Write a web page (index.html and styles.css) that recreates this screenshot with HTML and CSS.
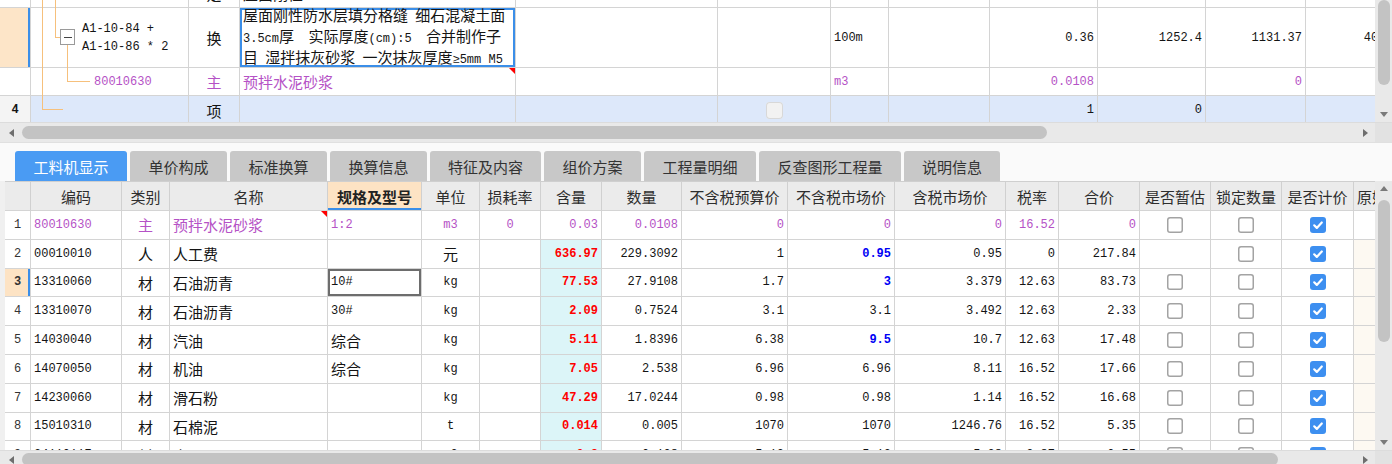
FILE: index.html
```html
<!DOCTYPE html>
<html lang="zh-CN">
<head>
<meta charset="utf-8">
<title>工料机显示</title>
<link rel="stylesheet" href="styles.css">
</head>
<body>
<div class="upper">
  <div class="ugrid">
    <div class="urow r0">
      <div class="cell"></div>
      <div class="cell"></div>
      <div class="cell c cn">定</div>
      <div class="cell cn">屋面刚性</div>
      <div class="cell"></div><div class="cell"></div><div class="cell"></div><div class="cell"></div>
      <div class="cell"></div><div class="cell"></div><div class="cell"></div><div class="cell"></div>
    </div>
    <div class="urow rh">
      <div class="cell pe"></div>
      <div class="cell treecell"><div class="tlines">A1-10-84 +<br>A1-10-86 * 2</div></div>
      <div class="cell c cn">换</div>
      <div class="cell sel"><div class="wrap cn">
        <div>屋面刚性防水层填分格缝<span class="m"> </span>细石混凝土面</div>
        <div><span class="m">3.5cm</span>厚<span class="m">  </span>实际厚度<span class="m">(cm):5  </span>合并制作子</div>
        <div>目<span class="m"> </span>湿拌抹灰砂浆<span class="m"> </span>一次抹灰厚度<span class="m">≥5mm M5</span></div>
      </div></div>
      <div class="cell"></div>
      <div class="cell"></div>
      <div class="cell">100m</div>
      <div class="cell"></div>
      <div class="cell r">0.36</div>
      <div class="cell r">1252.4</div>
      <div class="cell r">1131.37</div>
      <div class="cell r">407.29</div>
    </div>
    <div class="urow rm mag">
      <div class="cell"></div>
      <div class="cell treecell2">80010630</div>
      <div class="cell c cn">主</div>
      <div class="cell cn mark">预拌水泥砂浆</div>
      <div class="cell"></div>
      <div class="cell"></div>
      <div class="cell">m3</div>
      <div class="cell"></div>
      <div class="cell r">0.0108</div>
      <div class="cell r"></div>
      <div class="cell r">0</div>
      <div class="cell r"></div>
    </div>
    <div class="urow r4">
      <div class="cell c b lg">4</div>
      <div class="cell"></div>
      <div class="cell c cn">项</div>
      <div class="cell"></div>
      <div class="cell"></div>
      <div class="cell c"><span class="cb dis"></span></div>
      <div class="cell"></div>
      <div class="cell"></div>
      <div class="cell r">1</div>
      <div class="cell r">0</div>
      <div class="cell r"></div>
      <div class="cell r"></div>
    </div>
  </div>
  <svg class="tree" width="158" height="122" viewBox="0 0 158 122">
    <g stroke="#f6c07c" stroke-width="1" fill="none" shape-rendering="crispEdges">
      <path d="M11.5 0V109.5H32"/>
      <path d="M24.5 0V37.5H29"/>
      <path d="M36.5 45V81.5H58.5"/>
    </g>
    <rect x="29.5" y="29.5" width="14" height="15" fill="#fff" stroke="#9a9a9a" shape-rendering="crispEdges"/>
    <path d="M33 37.5H41" stroke="#444" stroke-width="1" shape-rendering="crispEdges"/>
  </svg>
  <div class="vbar">
    <div class="vthumb top"></div>
    <div class="sp"></div>
    <div class="tri-d"></div>
  </div>
</div>

<div class="hbar">
  <div class="abox"><span class="tri-l"></span></div>
  <div class="hthumb t1"></div>
  <div class="sp"></div>
  <div class="abox r"><span class="tri-r"></span></div>
  <div class="corner"></div>
</div>
<div class="gap"></div>

<div class="tabs cn">
  <div class="tab active w112">工料机显示</div>
  <div class="tab w97">单价构成</div>
  <div class="tab w97">标准换算</div>
  <div class="tab w97">换算信息</div>
  <div class="tab w111">特征及内容</div>
  <div class="tab w97">组价方案</div>
  <div class="tab w112">工程量明细</div>
  <div class="tab w142">反查图形工程量</div>
  <div class="tab w96">说明信息</div>
</div>

<div class="lower">
  <div class="lgrid">
    <div class="lrow lhead cn">
      <div class="cell"></div>
      <div class="cell c">编码</div>
      <div class="cell c">类别</div>
      <div class="cell c">名称</div>
      <div class="cell c hl">规格及型号</div>
      <div class="cell c">单位</div>
      <div class="cell c">损耗率</div>
      <div class="cell c">含量</div>
      <div class="cell c">数量</div>
      <div class="cell c">不含税预算价</div>
      <div class="cell c">不含税市场价</div>
      <div class="cell c">含税市场价</div>
      <div class="cell c">税率</div>
      <div class="cell c">合价</div>
      <div class="cell c">是否暂估</div>
      <div class="cell c">锁定数量</div>
      <div class="cell c">是否计价</div>
      <div class="cell">原始含量</div>
    </div>

    <div class="lrow mag">
      <div class="cell c num">1</div>
      <div class="cell">80010630</div>
      <div class="cell c cn">主</div>
      <div class="cell cn mark">预拌水泥砂浆</div>
      <div class="cell">1:2</div>
      <div class="cell c">m3</div>
      <div class="cell c">0</div>
      <div class="cell r">0.03</div>
      <div class="cell r">0.0108</div>
      <div class="cell r">0</div>
      <div class="cell r">0</div>
      <div class="cell r">0</div>
      <div class="cell r">16.52</div>
      <div class="cell r">0</div>
      <div class="cell c"><span class="cb"></span></div>
      <div class="cell c"><span class="cb"></span></div>
      <div class="cell c"><span class="cb on"><svg width="16" height="16" viewBox="0 0 16 16"><path d="M4.2 8.3l2.6 2.6 5-5.4" fill="none" stroke="#fff" stroke-width="2.2" stroke-linecap="round" stroke-linejoin="round"/></svg></span></div>
      <div class="cell"></div>
    </div>

    <div class="lrow">
      <div class="cell c num">2</div>
      <div class="cell">00010010</div>
      <div class="cell c cn">人</div>
      <div class="cell cn">人工费</div>
      <div class="cell"></div>
      <div class="cell c cn">元</div>
      <div class="cell c"></div>
      <div class="cell r cy red">636.97</div>
      <div class="cell r">229.3092</div>
      <div class="cell r">1</div>
      <div class="cell r blue">0.95</div>
      <div class="cell r">0.95</div>
      <div class="cell r">0</div>
      <div class="cell r">217.84</div>
      <div class="cell c"></div>
      <div class="cell c"><span class="cb"></span></div>
      <div class="cell c"><span class="cb on"><svg width="16" height="16" viewBox="0 0 16 16"><path d="M4.2 8.3l2.6 2.6 5-5.4" fill="none" stroke="#fff" stroke-width="2.2" stroke-linecap="round" stroke-linejoin="round"/></svg></span></div>
      <div class="cell cr"></div>
    </div>

    <div class="lrow">
      <div class="cell c num cur">3</div>
      <div class="cell">13310060</div>
      <div class="cell c cn">材</div>
      <div class="cell cn">石油沥青</div>
      <div class="cell focus">10#</div>
      <div class="cell c">kg</div>
      <div class="cell c"></div>
      <div class="cell r cy red">77.53</div>
      <div class="cell r">27.9108</div>
      <div class="cell r">1.7</div>
      <div class="cell r blue">3</div>
      <div class="cell r">3.379</div>
      <div class="cell r">12.63</div>
      <div class="cell r">83.73</div>
      <div class="cell c"><span class="cb"></span></div>
      <div class="cell c"><span class="cb"></span></div>
      <div class="cell c"><span class="cb on"><svg width="16" height="16" viewBox="0 0 16 16"><path d="M4.2 8.3l2.6 2.6 5-5.4" fill="none" stroke="#fff" stroke-width="2.2" stroke-linecap="round" stroke-linejoin="round"/></svg></span></div>
      <div class="cell cr"></div>
    </div>

    <div class="lrow">
      <div class="cell c num">4</div>
      <div class="cell">13310070</div>
      <div class="cell c cn">材</div>
      <div class="cell cn">石油沥青</div>
      <div class="cell">30#</div>
      <div class="cell c">kg</div>
      <div class="cell c"></div>
      <div class="cell r cy red">2.09</div>
      <div class="cell r">0.7524</div>
      <div class="cell r">3.1</div>
      <div class="cell r">3.1</div>
      <div class="cell r">3.492</div>
      <div class="cell r">12.63</div>
      <div class="cell r">2.33</div>
      <div class="cell c"><span class="cb"></span></div>
      <div class="cell c"><span class="cb"></span></div>
      <div class="cell c"><span class="cb on"><svg width="16" height="16" viewBox="0 0 16 16"><path d="M4.2 8.3l2.6 2.6 5-5.4" fill="none" stroke="#fff" stroke-width="2.2" stroke-linecap="round" stroke-linejoin="round"/></svg></span></div>
      <div class="cell cr"></div>
    </div>

    <div class="lrow">
      <div class="cell c num">5</div>
      <div class="cell">14030040</div>
      <div class="cell c cn">材</div>
      <div class="cell cn">汽油</div>
      <div class="cell cn">综合</div>
      <div class="cell c">kg</div>
      <div class="cell c"></div>
      <div class="cell r cy red">5.11</div>
      <div class="cell r">1.8396</div>
      <div class="cell r">6.38</div>
      <div class="cell r blue">9.5</div>
      <div class="cell r">10.7</div>
      <div class="cell r">12.63</div>
      <div class="cell r">17.48</div>
      <div class="cell c"><span class="cb"></span></div>
      <div class="cell c"><span class="cb"></span></div>
      <div class="cell c"><span class="cb on"><svg width="16" height="16" viewBox="0 0 16 16"><path d="M4.2 8.3l2.6 2.6 5-5.4" fill="none" stroke="#fff" stroke-width="2.2" stroke-linecap="round" stroke-linejoin="round"/></svg></span></div>
      <div class="cell cr"></div>
    </div>

    <div class="lrow">
      <div class="cell c num">6</div>
      <div class="cell">14070050</div>
      <div class="cell c cn">材</div>
      <div class="cell cn">机油</div>
      <div class="cell cn">综合</div>
      <div class="cell c">kg</div>
      <div class="cell c"></div>
      <div class="cell r cy red">7.05</div>
      <div class="cell r">2.538</div>
      <div class="cell r">6.96</div>
      <div class="cell r">6.96</div>
      <div class="cell r">8.11</div>
      <div class="cell r">16.52</div>
      <div class="cell r">17.66</div>
      <div class="cell c"><span class="cb"></span></div>
      <div class="cell c"><span class="cb"></span></div>
      <div class="cell c"><span class="cb on"><svg width="16" height="16" viewBox="0 0 16 16"><path d="M4.2 8.3l2.6 2.6 5-5.4" fill="none" stroke="#fff" stroke-width="2.2" stroke-linecap="round" stroke-linejoin="round"/></svg></span></div>
      <div class="cell cr"></div>
    </div>

    <div class="lrow">
      <div class="cell c num">7</div>
      <div class="cell">14230060</div>
      <div class="cell c cn">材</div>
      <div class="cell cn">滑石粉</div>
      <div class="cell"></div>
      <div class="cell c">kg</div>
      <div class="cell c"></div>
      <div class="cell r cy red">47.29</div>
      <div class="cell r">17.0244</div>
      <div class="cell r">0.98</div>
      <div class="cell r">0.98</div>
      <div class="cell r">1.14</div>
      <div class="cell r">16.52</div>
      <div class="cell r">16.68</div>
      <div class="cell c"><span class="cb"></span></div>
      <div class="cell c"><span class="cb"></span></div>
      <div class="cell c"><span class="cb on"><svg width="16" height="16" viewBox="0 0 16 16"><path d="M4.2 8.3l2.6 2.6 5-5.4" fill="none" stroke="#fff" stroke-width="2.2" stroke-linecap="round" stroke-linejoin="round"/></svg></span></div>
      <div class="cell cr"></div>
    </div>

    <div class="lrow">
      <div class="cell c num">8</div>
      <div class="cell">15010310</div>
      <div class="cell c cn">材</div>
      <div class="cell cn">石棉泥</div>
      <div class="cell"></div>
      <div class="cell c">t</div>
      <div class="cell c"></div>
      <div class="cell r cy red">0.014</div>
      <div class="cell r">0.005</div>
      <div class="cell r">1070</div>
      <div class="cell r">1070</div>
      <div class="cell r">1246.76</div>
      <div class="cell r">16.52</div>
      <div class="cell r">5.35</div>
      <div class="cell c"><span class="cb"></span></div>
      <div class="cell c"><span class="cb"></span></div>
      <div class="cell c"><span class="cb on"><svg width="16" height="16" viewBox="0 0 16 16"><path d="M4.2 8.3l2.6 2.6 5-5.4" fill="none" stroke="#fff" stroke-width="2.2" stroke-linecap="round" stroke-linejoin="round"/></svg></span></div>
      <div class="cell cr"></div>
    </div>

    <div class="lrow">
      <div class="cell c num">9</div>
      <div class="cell">34110117</div>
      <div class="cell c cn">材</div>
      <div class="cell cn">水</div>
      <div class="cell"></div>
      <div class="cell c">m3</div>
      <div class="cell c"></div>
      <div class="cell r cy red">0.3</div>
      <div class="cell r">0.108</div>
      <div class="cell r">5.13</div>
      <div class="cell r">5.13</div>
      <div class="cell r">5.28</div>
      <div class="cell r">2.87</div>
      <div class="cell r">0.55</div>
      <div class="cell c"><span class="cb"></span></div>
      <div class="cell c"><span class="cb"></span></div>
      <div class="cell c"><span class="cb on"></span></div>
      <div class="cell cr"></div>
    </div>
  </div>
  <div class="vbar v2">
    <div class="tri-u"></div>
    <div class="vthumb t2"></div>
    <div class="sp"></div>
    <div class="tri-d"></div>
  </div>
</div>

<div class="hbar h2">
  <div class="abox"><span class="tri-l"></span></div>
  <div class="hthumb t3"></div>
  <div class="sp"></div>
  <div class="abox r"><span class="tri-r"></span></div>
  <div class="corner"></div>
</div>
</body>
</html>
```

FILE: styles.css
```css
* { box-sizing: border-box; margin: 0; padding: 0; }
html, body { width: 1392px; height: 464px; overflow: hidden; background: #fff; }
body {
  font-family: "Liberation Mono", "Noto Sans CJK SC", monospace;
  font-size: 12px;
  color: #141414;
}
.cn { font-family: "Noto Sans CJK SC", "Noto Sans", sans-serif; font-size: 15px; }
.m { font-family: "Liberation Mono", monospace; font-size: 12px; white-space: pre; }
.b { font-weight: bold; }

/* ---------- upper grid ---------- */
.upper { display: flex; height: 122px; position: relative; }
.ugrid { width: 1375px; height: 122px; overflow: hidden; }
.urow {
  display: grid;
  grid-template-columns: 31px 158px 51px 276px 202px 113px 58px 101px 108px 108px 100px 105px;
  background: #fff;
}
.cell {
  border-right: 1px solid #d4d4d4;
  border-bottom: 1px solid #d4d4d4;
  display: flex;
  align-items: center;
  padding: 0 3px;
  white-space: nowrap;
  overflow: hidden;
  position: relative;
  min-width: 0;
}
.c { justify-content: center; }
.r { justify-content: flex-end; }
.r0 { height: 29px; margin-top: -21px; }
.rh { height: 60px; }
.rm { height: 28px; }
.r4 { height: 29px; background: #dde8fa; }
.lg { background: #f4f4f4; }
.pe { background: #fde5c8; box-shadow: inset -2px 0 0 #3b8ee8; }
.treecell { padding-left: 51px; }
.tlines { line-height: 18px; }
.treecell2 { padding-left: 63px; }
.sel { box-shadow: inset 0 0 0 2px #3b8ee8; padding-left: 3px; }
.wrap { line-height: 17px; white-space: nowrap; }
.mag { color: #b552c6; }
.mark::after {
  content: "";
  position: absolute;
  top: 0;
  right: 0;
  border-top: 6px solid #f00;
  border-left: 6px solid transparent;
}
.tree { position: absolute; left: 31px; top: 0; pointer-events: none; }

/* ---------- scrollbars ---------- */
.vbar {
  width: 17px;
  background: #e9e9e9;
  display: flex;
  flex-direction: column;
  align-items: center;
}
.vthumb { width: 12px; background: #c3c3c3; border-radius: 6px; }
.vthumb.top { height: 85px; }
.vbar .sp { flex: 1; }
.tri-d {
  width: 0; height: 0;
  border-left: 4px solid transparent;
  border-right: 4px solid transparent;
  border-top: 5px solid #7a7a7a;
  margin-bottom: 5px;
}
.tri-u {
  width: 0; height: 0;
  border-left: 4px solid transparent;
  border-right: 4px solid transparent;
  border-bottom: 5px solid #7a7a7a;
  margin-top: 5px;
}
.v2 .t2 { height: 142px; margin-top: 9px; }

.hbar {
  height: 20px;
  background: #e9e9e9;
  border-top: 1px solid #dcdcdc;
  display: flex;
  align-items: center;
}
.abox { width: 22px; display: flex; justify-content: center; }
.abox.r { width: 20px; }
.tri-l {
  width: 0; height: 0;
  border-top: 4px solid transparent;
  border-bottom: 4px solid transparent;
  border-right: 5px solid #6e6e6e;
}
.tri-r {
  width: 0; height: 0;
  border-top: 4px solid transparent;
  border-bottom: 4px solid transparent;
  border-left: 5px solid #6e6e6e;
}
.hthumb { height: 13px; border-radius: 7px; background: #c3c3c3; }
.t1 { width: 1025px; }
.t3 { width: 1256px; }
.hbar .sp { flex: 1; }
.corner { width: 17px; align-self: stretch; background: #e2e2e2; }
.h2 { height: 14px; align-items: flex-start; }
.h2 .hthumb { margin-top: 2px; }
.h2 .abox { margin-top: 5px; }

.gap { height: 9px; background: #fafafa; border-top: 1px solid #e0e0e0; }

/* ---------- tabs ---------- */
.tabs {
  display: flex;
  gap: 3px;
  padding-left: 15px;
  height: 30px;
  background: #fafafa;
}
.tab {
  height: 30px;
  background: #c8c8c8;
  border-radius: 3px 3px 0 0;
  display: flex;
  align-items: center;
  justify-content: center;
  color: #333;
}
.tab.active { background: #4a9bf3; color: #fff; }
.w112 { width: 112px; }
.w97 { width: 97px; }
.w111 { width: 111px; }
.w142 { width: 142px; }
.w96 { width: 96px; }

/* ---------- lower grid ---------- */
.lower { display: flex; height: 269px; background: #f0f0f0; padding-left: 5px; }
.lgrid { width: 1370px; overflow: hidden; border-top: 1px solid #cfcfcf; }
.lrow {
  display: grid;
  grid-template-columns: 26px 91px 48px 158px 94px 58px 61px 61px 80px 106px 107px 111px 53px 81px 71px 71px 72px 64px;
  height: 28.8px;
  background: #fff;
}
.lhead { height: 29px; background: #ebebeb; color: #2e2e2e; }
.lhead .cell { border-right-color: #d0d0d0; }
.hl { background: #fde3c4; font-weight: bold; color: #222; box-shadow: inset 0 -2px 0 #3b8ee8; }
.num { color: #333; }
.cur { background: #fde3c4; font-weight: bold; box-shadow: inset -2px 0 0 #3b8ee8; }
.focus { box-shadow: inset 0 0 0 2px #6d6d6d; }
.cy { background: #dcf5f8; }
.cr { background: #fdf9f2; }
.red { color: #f00; font-weight: bold; }
.blue { color: #0000f5; font-weight: bold; }

.cb {
  display: block;
  width: 16px;
  height: 16px;
  border-radius: 3px;
  background: #fff;
  box-shadow: inset 0 0 0 1.5px #a3a3a3;
}
.cb.on { background: #3d8ff0; box-shadow: none; }
.cb svg { display: block; }
.cb.dis { width: 17px; height: 17px; background: #f2f2f2; box-shadow: inset 0 0 0 1px #d8d8d8; border-radius: 4px; }
```
